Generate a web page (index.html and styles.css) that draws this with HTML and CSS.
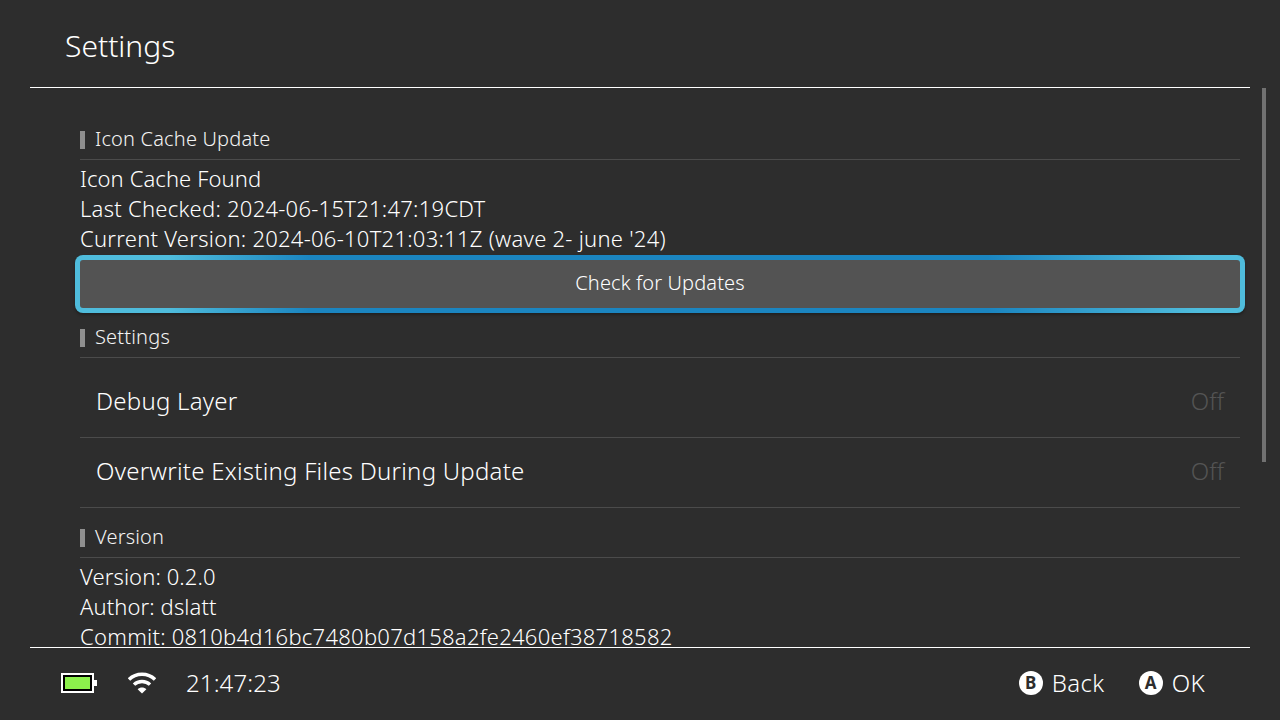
FILE: index.html

```html
<!DOCTYPE html>
<html lang="en">
<head>
  <meta charset="UTF-8">
  <title>Settings</title>
  <link rel="stylesheet" href="styles.css">
</head>
<body>
  <div class="app">
    <header class="app-header">
      <h1 class="app-title">Settings</h1>
    </header>

    <main class="app-body">
      <div class="scroll-clip">
        <div class="scroll-list">
          <h2 class="section-head">Icon Cache Update</h2>
          <div class="info">
            <p class="info-short">Icon Cache Found</p>
            <p>Last Checked: 2024-06-15T21:47:19CDT</p>
            <p>Current Version: 2024-06-10T21:03:11Z (wave 2- june '24)</p>
          </div>
          <button class="update-btn">Check for Updates</button>

          <h2 class="section-head section-head-next">Settings</h2>
          <div class="toggle-row">
            <span class="toggle-label">Debug Layer</span>
            <span class="toggle-value">Off</span>
          </div>
          <div class="toggle-row">
            <span class="toggle-label">Overwrite Existing Files During Update</span>
            <span class="toggle-value">Off</span>
          </div>

          <h2 class="section-head section-head-version">Version</h2>
          <div class="info">
            <p class="info-short">Version: 0.2.0</p>
            <p class="info-short">Author: dslatt</p>
            <p>Commit: 0810b4d16bc7480b07d158a2fe2460ef38718582</p>
          </div>
        </div>
      </div>
      <div class="scrollbar"></div>
    </main>

    <footer class="app-footer">
      <div class="status">
        <div class="battery">
          <div class="battery-body"><div class="battery-fill"></div></div>
          <div class="battery-tip"></div>
        </div>
        <svg class="wifi" width="28" height="22" viewBox="0 0 28 22">
          <path d="M1 7.5 C8 0.5 20 0.5 27 7.5" fill="none" stroke="#fff" stroke-width="3.4"/>
          <path d="M6 12.6 C10.2 8.4 17.8 8.4 22 12.6" fill="none" stroke="#fff" stroke-width="3.4"/>
          <path d="M9.6 17.2 C12 15 16 15 18.4 17.2 L14 21.5 Z" fill="#fff"/>
        </svg>
        <span class="clock">21:47:23</span>
      </div>
      <div class="hints">
        <span class="hint"><span class="hint-btn">B</span>Back</span>
        <span class="hint"><span class="hint-btn">A</span>OK</span>
      </div>
    </footer>
  </div>
</body>
</html>
```

FILE: styles.css

```css
* {
  box-sizing: border-box;
}

body {
  margin: 0;
  background: #2d2d2d;
  color: #fff;
  font-family: "Noto Sans", "Open Sans", sans-serif;
  font-weight: 300;
  overflow: hidden;
}

.app {
  width: 1280px;
  height: 720px;
  display: flex;
  flex-direction: column;
}

.app-header {
  height: 88px;
  margin: 0 30px;
  padding: 26px 35px 0;
  border-bottom: 1px solid #fff;
}

.app-title {
  margin: 0;
  font-size: 30px;
  font-weight: 300;
  line-height: 40px;
}

.app-body {
  height: 560px;
  padding-left: 30px;
  display: flex;
}

.scroll-clip {
  width: 1220px;
  padding: 0 10px 0 50px;
  border-bottom: 1px solid #fff;
  overflow: hidden;
  flex: none;
}

.scroll-list {
  width: 1160px;
  padding-top: 33px;
}

.scrollbar {
  width: 4px;
  height: 374px;
  margin-left: 12px;
  background: #717171;
  flex: none;
}

.section-head {
  height: 39px;
  margin: 0;
  padding: 8px 0 0 15px;
  border-bottom: 1px solid #4b4b4b;
  font-size: 20px;
  font-weight: 300;
  letter-spacing: 0.18px;
  line-height: 20px;
  color: #f4f4f4;
  position: relative;
}

.section-head::before {
  content: "";
  position: absolute;
  left: 0;
  top: 10px;
  width: 5px;
  height: 18px;
  background: #8f8f8f;
}

.section-head-next {
  margin-top: 6px;
}

.section-head-version {
  margin-top: 11px;
}

.info {
  padding-top: 3px;
}

.info p {
  margin: 0;
  font-size: 22px;
  letter-spacing: 0.26px;
  line-height: 30px;
  white-space: nowrap;
}

.info .info-short {
  letter-spacing: 0.1px;
}

.update-btn {
  display: block;
  width: 1170px;
  height: 58px;
  margin: 2px 0 0 -5px;
  padding: 0 0 3px;
  border: 5px solid transparent;
  border-radius: 8px;
  background:
    linear-gradient(#535353, #535353) padding-box,
    linear-gradient(90deg, #4fbcdc 0%, #4fbcdc 8%, #1b85c0 20%, #1b85c0 78%, #4fbcdc 96%, #4fbcdc 100%) border-box;
  box-shadow: 0 2px 3px rgba(0, 0, 0, 0.3);
  color: #fff;
  font: inherit;
  font-size: 20px;
  letter-spacing: 0.12px;
  line-height: 40px;
}

.toggle-row {
  height: 70px;
  padding: 0 16px 4px;
  border-bottom: 1px solid #4b4b4b;
  display: flex;
  align-items: center;
  justify-content: space-between;
}

.section-head + .toggle-row {
  height: 80px;
  padding-top: 9px;
  padding-bottom: 3px;
}

.toggle-label {
  font-size: 24px;
  letter-spacing: 0.24px;
}

.toggle-value {
  font-size: 24px;
  color: #545454;
}

.app-footer {
  flex: 1;
  padding: 0 75px 3px 61px;
  display: flex;
  align-items: center;
  justify-content: space-between;
}

.status {
  display: flex;
  align-items: center;
}

.battery {
  display: flex;
  align-items: center;
}

.battery-body {
  width: 33px;
  height: 20px;
  border: 2px solid #fff;
  background: #000;
  padding: 2px;
}

.battery-fill {
  height: 100%;
  background: #8cf04c;
}

.battery-tip {
  width: 3px;
  height: 6px;
  background: #fff;
}

.wifi {
  margin-left: 31px;
}

.clock {
  margin-left: 30px;
  font-size: 24px;
  letter-spacing: 0.12px;
}

.hints {
  display: flex;
  gap: 34px;
}

.hint {
  display: flex;
  align-items: center;
  gap: 9px;
  font-size: 24px;
  letter-spacing: 0.4px;
}

.hint-btn {
  width: 24px;
  height: 24px;
  border-radius: 50%;
  background: #fff;
  color: #2d2d2d;
  font-size: 17px;
  font-weight: 700;
  letter-spacing: 0;
  line-height: 24px;
  text-align: center;
}
```
